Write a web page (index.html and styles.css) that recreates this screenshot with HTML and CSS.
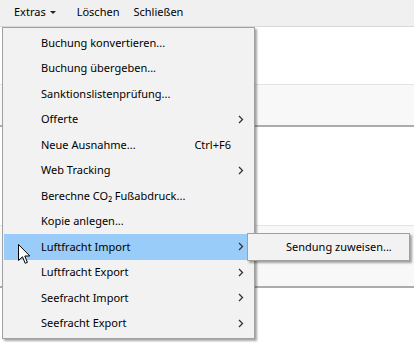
FILE: index.html
```html
<!DOCTYPE html>
<html lang="de">
<head>
<meta charset="utf-8">
<link rel="stylesheet" href="styles.css">
</head>
<body>
<div class="toolbar">
  <span class="tb-item tb-extras">Extras<span class="caret"></span></span>
  <span class="tb-item tb-del">Löschen</span>
  <span class="tb-item">Schließen</span>
</div>
<div class="content">
  <div class="gap1"></div>
  <div class="panel p1"></div>
  <div class="gap2"></div>
  <div class="panel p2"></div>
</div>

<div class="menu">
  <div class="mi"><span>Buchung konvertieren...</span><span></span><span></span></div>
  <div class="mi"><span>Buchung übergeben...</span><span></span><span></span></div>
  <div class="mi"><span>Sanktionslistenprüfung...</span><span></span><span></span></div>
  <div class="mi"><span>Offerte</span><span></span><span class="arr"><svg width="6" height="9" viewBox="0 0 6 9"><path d="M1 1 L4.5 4.5 L1 8" fill="none" stroke="#333" stroke-width="1.3"/></svg></span></div>
  <div class="mi"><span>Neue Ausnahme...</span><span class="sc">Ctrl+F6</span><span></span></div>
  <div class="mi"><span>Web Tracking</span><span></span><span class="arr"><svg width="6" height="9" viewBox="0 0 6 9"><path d="M1 1 L4.5 4.5 L1 8" fill="none" stroke="#333" stroke-width="1.3"/></svg></span></div>
  <div class="mi"><span>Berechne CO₂ Fußabdruck...</span><span></span><span></span></div>
  <div class="mi"><span>Kopie anlegen...</span><span></span><span></span></div>
  <div class="mi active"><span>Luftfracht Import</span><span></span><span class="arr"><svg width="6" height="9" viewBox="0 0 6 9"><path d="M1 1 L4.5 4.5 L1 8" fill="none" stroke="#333" stroke-width="1.3"/></svg></span></div>
  <div class="mi"><span>Luftfracht Export</span><span></span><span class="arr"><svg width="6" height="9" viewBox="0 0 6 9"><path d="M1 1 L4.5 4.5 L1 8" fill="none" stroke="#333" stroke-width="1.3"/></svg></span></div>
  <div class="mi"><span>Seefracht Import</span><span></span><span class="arr"><svg width="6" height="9" viewBox="0 0 6 9"><path d="M1 1 L4.5 4.5 L1 8" fill="none" stroke="#333" stroke-width="1.3"/></svg></span></div>
  <div class="mi"><span>Seefracht Export</span><span></span><span class="arr"><svg width="6" height="9" viewBox="0 0 6 9"><path d="M1 1 L4.5 4.5 L1 8" fill="none" stroke="#333" stroke-width="1.3"/></svg></span></div>
</div>

<div class="submenu">
  <div class="smi">Sendung zuweisen...</div>
</div>

<svg class="cursor" width="13" height="21" viewBox="0 0 13 21">
  <path d="M0.5 0.5 L0.5 16.5 L4.5 12.8 L7.2 19.3 L9.4 18.3 L6.8 12 L11.8 12 Z" fill="#fff" stroke="#000" stroke-width="1" stroke-linejoin="miter"/>
</svg>
</body>
</html>
```
FILE: styles.css
```css
html, body {
  margin: 0;
  padding: 0;
}
body {
  width: 414px;
  height: 344px;
  overflow: hidden;
  background: #ffffff;
  font-family: "Noto Sans", "Open Sans", sans-serif;
  font-size: 11px;
  color: #000;
  position: relative;
}
.toolbar {
  height: 26px;
  background: #f0f0f0;
  border-bottom: 1px solid #d9d9d9;
  display: flex;
  align-items: center;
  padding-left: 14px;
}
.tb-item {
  display: inline-flex;
  align-items: center;
  line-height: 16px;
  margin-top: -2px;
}
.tb-extras { margin-right: 21px; }
.tb-del { margin-right: 14px; }
.caret {
  display: inline-block;
  width: 0;
  height: 0;
  border-left: 3px solid transparent;
  border-right: 3px solid transparent;
  border-top: 3px solid #222;
  margin-left: 4px;
  margin-top: 1px;
}
.content {
  display: flex;
  flex-direction: column;
}
.gap1 { height: 57px; }
.gap2 { height: 98px; }
.panel {
  background: #f8f8f8;
  border-top: 1px solid #e3e3e3;
  border-bottom: 2px solid #acacac;
}
.p1 { height: 40px; }
.p2 { height: 60px; }

.menu {
  position: absolute;
  left: 2px;
  top: 27px;
  width: 248px;
  padding: 2px 2px 2px 1px;
  background: #f2f2f2;
  border: 1px solid #a0a0a0;
  box-shadow: 2px 2px 2px rgba(0,0,0,0.35);
}
.mi {
  height: 25.5px;
  display: grid;
  grid-template-columns: 1fr auto 18px;
  align-items: center;
  padding-left: 37px;
  line-height: 16px;
}
.mi.active {
  background: #99ccf8;
}
.sc {
  padding-right: 3px;
}
.arr {
  display: flex;
  align-items: center;
  padding-left: 4px;
  height: 9px;
}
.arr svg { display: block; }

.submenu {
  position: absolute;
  left: 247px;
  top: 233px;
  width: 161px;
  height: 26px;
  background: #f2f2f2;
  border: 1px solid #a0a0a0;
  box-shadow: 2px 2px 2px rgba(0,0,0,0.35);
}
.smi {
  height: 26px;
  display: flex;
  align-items: center;
  padding-left: 38px;
  line-height: 16px;
}
.cursor {
  position: absolute;
  left: 18px;
  top: 244px;
}
```
